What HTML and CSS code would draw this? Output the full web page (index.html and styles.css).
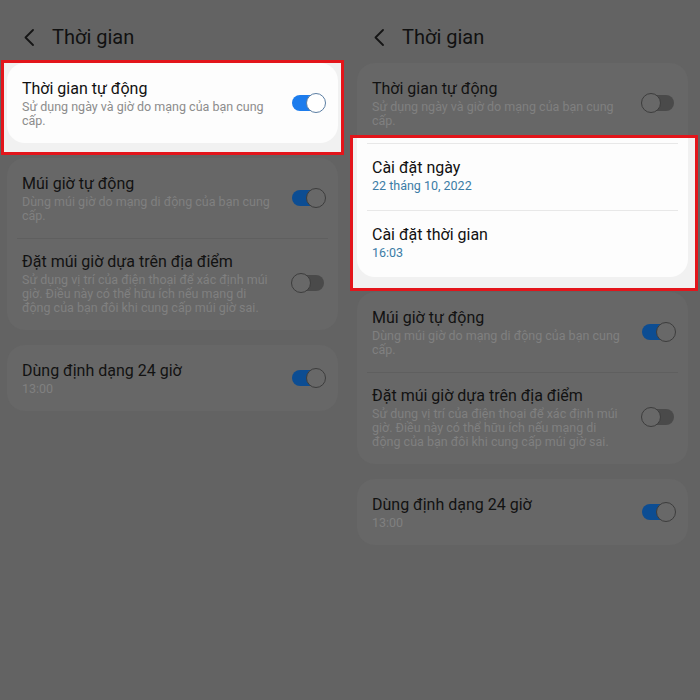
FILE: index.html
```html
<!DOCTYPE html>
<html lang="vi">
<head>
<meta charset="utf-8">
<title>Thời gian</title>
<link rel="stylesheet" href="styles.css">
</head>
<body>
<main class="screen">
  <section class="panel">
    <header class="bar">
      <svg class="back" viewBox="0 0 10 17" width="10" height="17"><path d="M9 1 L1.5 8.5 L9 16" fill="none" stroke="currentColor" stroke-width="1.8" stroke-linecap="round" stroke-linejoin="round"/></svg>
      <h1 class="bar-title">Thời gian</h1>
    </header>
    <div class="mark mark-left">
      <div class="card lit">
        <div class="row">
          <div class="text">
            <div class="title">Thời gian tự động</div>
            <div class="sub">Sử dụng ngày và giờ do mạng của bạn cung cấp.</div>
          </div>
          <span class="switch on"><span class="knob"></span></span>
        </div>
      </div>
    </div>
    <div class="card dim after-left-mark">
      <div class="row">
        <div class="text">
          <div class="title">Múi giờ tự động</div>
          <div class="sub">Dùng múi giờ do mạng di động của bạn cung cấp.</div>
        </div>
        <span class="switch on"><span class="knob"></span></span>
      </div>
      <div class="divider"></div>
      <div class="row next">
        <div class="text">
          <div class="title">Đặt múi giờ dựa trên địa điểm</div>
          <div class="sub">Sử dụng vị trí của điện thoại để xác định múi giờ. Điều này có thể hữu ích nếu mạng di động của bạn đôi khi cung cấp múi giờ sai.</div>
        </div>
        <span class="switch off"><span class="knob"></span></span>
      </div>
    </div>
    <div class="card dim spaced">
      <div class="row">
        <div class="text">
          <div class="title">Dùng định dạng 24 giờ</div>
          <div class="sub">13:00</div>
        </div>
        <span class="switch on"><span class="knob"></span></span>
      </div>
    </div>
  </section>

  <section class="panel">
    <header class="bar">
      <svg class="back" viewBox="0 0 10 17" width="10" height="17"><path d="M9 1 L1.5 8.5 L9 16" fill="none" stroke="currentColor" stroke-width="1.8" stroke-linecap="round" stroke-linejoin="round"/></svg>
      <h1 class="bar-title">Thời gian</h1>
    </header>
    <div class="card dim split-top">
      <div class="row cut">
        <div class="text">
          <div class="title">Thời gian tự động</div>
          <div class="sub">Sử dụng ngày và giờ do mạng của bạn cung cấp.</div>
        </div>
        <span class="switch off"><span class="knob"></span></span>
      </div>
    </div>
    <div class="mark mark-right">
      <div class="card lit split-bottom">
        <div class="divider"></div>
        <div class="row tall">
          <div class="text">
            <div class="title">Cài đặt ngày</div>
            <div class="sub value">22 tháng 10, 2022</div>
          </div>
        </div>
        <div class="divider"></div>
        <div class="row tall">
          <div class="text">
            <div class="title">Cài đặt thời gian</div>
            <div class="sub value">16:03</div>
          </div>
        </div>
      </div>
    </div>
    <div class="card dim after-right-mark">
      <div class="row">
        <div class="text">
          <div class="title">Múi giờ tự động</div>
          <div class="sub">Dùng múi giờ do mạng di động của bạn cung cấp.</div>
        </div>
        <span class="switch on"><span class="knob"></span></span>
      </div>
      <div class="divider"></div>
      <div class="row next">
        <div class="text">
          <div class="title">Đặt múi giờ dựa trên địa điểm</div>
          <div class="sub">Sử dụng vị trí của điện thoại để xác định múi giờ. Điều này có thể hữu ích nếu mạng di động của bạn đôi khi cung cấp múi giờ sai.</div>
        </div>
        <span class="switch off"><span class="knob"></span></span>
      </div>
    </div>
    <div class="card dim spaced">
      <div class="row">
        <div class="text">
          <div class="title">Dùng định dạng 24 giờ</div>
          <div class="sub">13:00</div>
        </div>
        <span class="switch on"><span class="knob"></span></span>
      </div>
    </div>
  </section>
</main>
</body>
</html>
```

FILE: styles.css
```css
html, body {
  margin: 0;
  padding: 0;
}

body {
  background: #636363;
  font-family: Roboto, "Noto Sans", "Liberation Sans", sans-serif;
  color: #111111;
  width: 700px;
  height: 700px;
  overflow: hidden;
}

.screen {
  display: flex;
  width: 700px;
  height: 700px;
}

.panel {
  width: 350px;
  flex-shrink: 0;
  display: flex;
  flex-direction: column;
}

.bar {
  box-sizing: border-box;
  height: 60px;
  padding: 14px 0 0 24px;
  display: flex;
  align-items: center;
  color: #151515;
}

.back {
  display: block;
  flex-shrink: 0;
}

.bar-title {
  margin: 0 0 0 18px;
  font-size: 20px;
  font-weight: 400;
  line-height: 24px;
  color: #111111;
}

/* red highlight frames */
.mark {
  border: 3px solid #e3151b;
  background: #f1f1f1;
  display: flex;
  flex-direction: column;
}

.mark-left {
  margin-left: 1px;
  width: 337px;
  padding-bottom: 9px;
}

.mark-right {
  width: 342px;
  padding-bottom: 11px;
}

.mark-left .card {
  margin-left: 3px;
}

.mark-right .card {
  margin-left: 4px;
}

/* cards */
.card {
  width: 331px;
  border-radius: 18px;
  margin-left: 7px;
  display: flex;
  flex-direction: column;
}

.card.dim {
  background: #676767;
}

.card.lit {
  background: #fdfdfd;
}

.after-left-mark {
  margin-top: 3px;
}

.after-right-mark {
  margin-top: 1px;
}

.spaced {
  margin-top: 15px;
}

.split-top {
  margin-top: 3px;
  border-radius: 18px 18px 0 0;
}

.split-bottom {
  border-radius: 0 0 18px 18px;
  padding-top: 5px;
}

/* rows */
.row {
  display: flex;
  align-items: center;
  gap: 16px;
  padding: 15px 12px 15px 15px;
}

.row.next {
  padding-top: 12px;
}

.row.cut {
  padding-bottom: 7px;
}

.row.tall {
  padding-top: 13px;
  padding-bottom: 17px;
}

.text {
  flex: 1;
  min-width: 0;
}

.title {
  font-size: 16px;
  line-height: 22px;
}

.sub {
  font-size: 12.5px;
  line-height: 14px;
}

.dim .title {
  color: #121212;
}

.dim .sub {
  color: #808080;
}

.lit .title {
  color: #111111;
}

.lit .sub {
  color: #8c8c8c;
}

.lit .sub.value {
  color: #3b7ca6;
}

.divider {
  height: 1px;
  margin: 0 10px;
}

.dim .divider {
  background: #5f5f5f;
}

.lit .divider {
  background: #e8e8e8;
}

/* switches */
.switch {
  width: 32px;
  height: 16px;
  border-radius: 8px;
  margin-right: 2px;
  display: flex;
  align-items: center;
  flex-shrink: 0;
}

.knob {
  box-sizing: border-box;
  width: 20px;
  height: 20px;
  border-radius: 50%;
  border: 1.5px solid;
  flex-shrink: 0;
}

.switch.on {
  justify-content: flex-end;
}

.switch.on .knob {
  margin-right: -2px;
}

.switch.off {
  justify-content: flex-start;
}

.switch.off .knob {
  margin-left: -1px;
}

.dim .switch.on {
  background: #0c4d93;
}

.dim .switch.off {
  background: #4a4a4a;
}

.dim .knob {
  background: #686868;
  border-color: #3d3d3d;
}

.lit .switch.on {
  background: #1c7ced;
}

.lit .knob {
  background: #ffffff;
  border-color: #5b7ea3;
}
```
